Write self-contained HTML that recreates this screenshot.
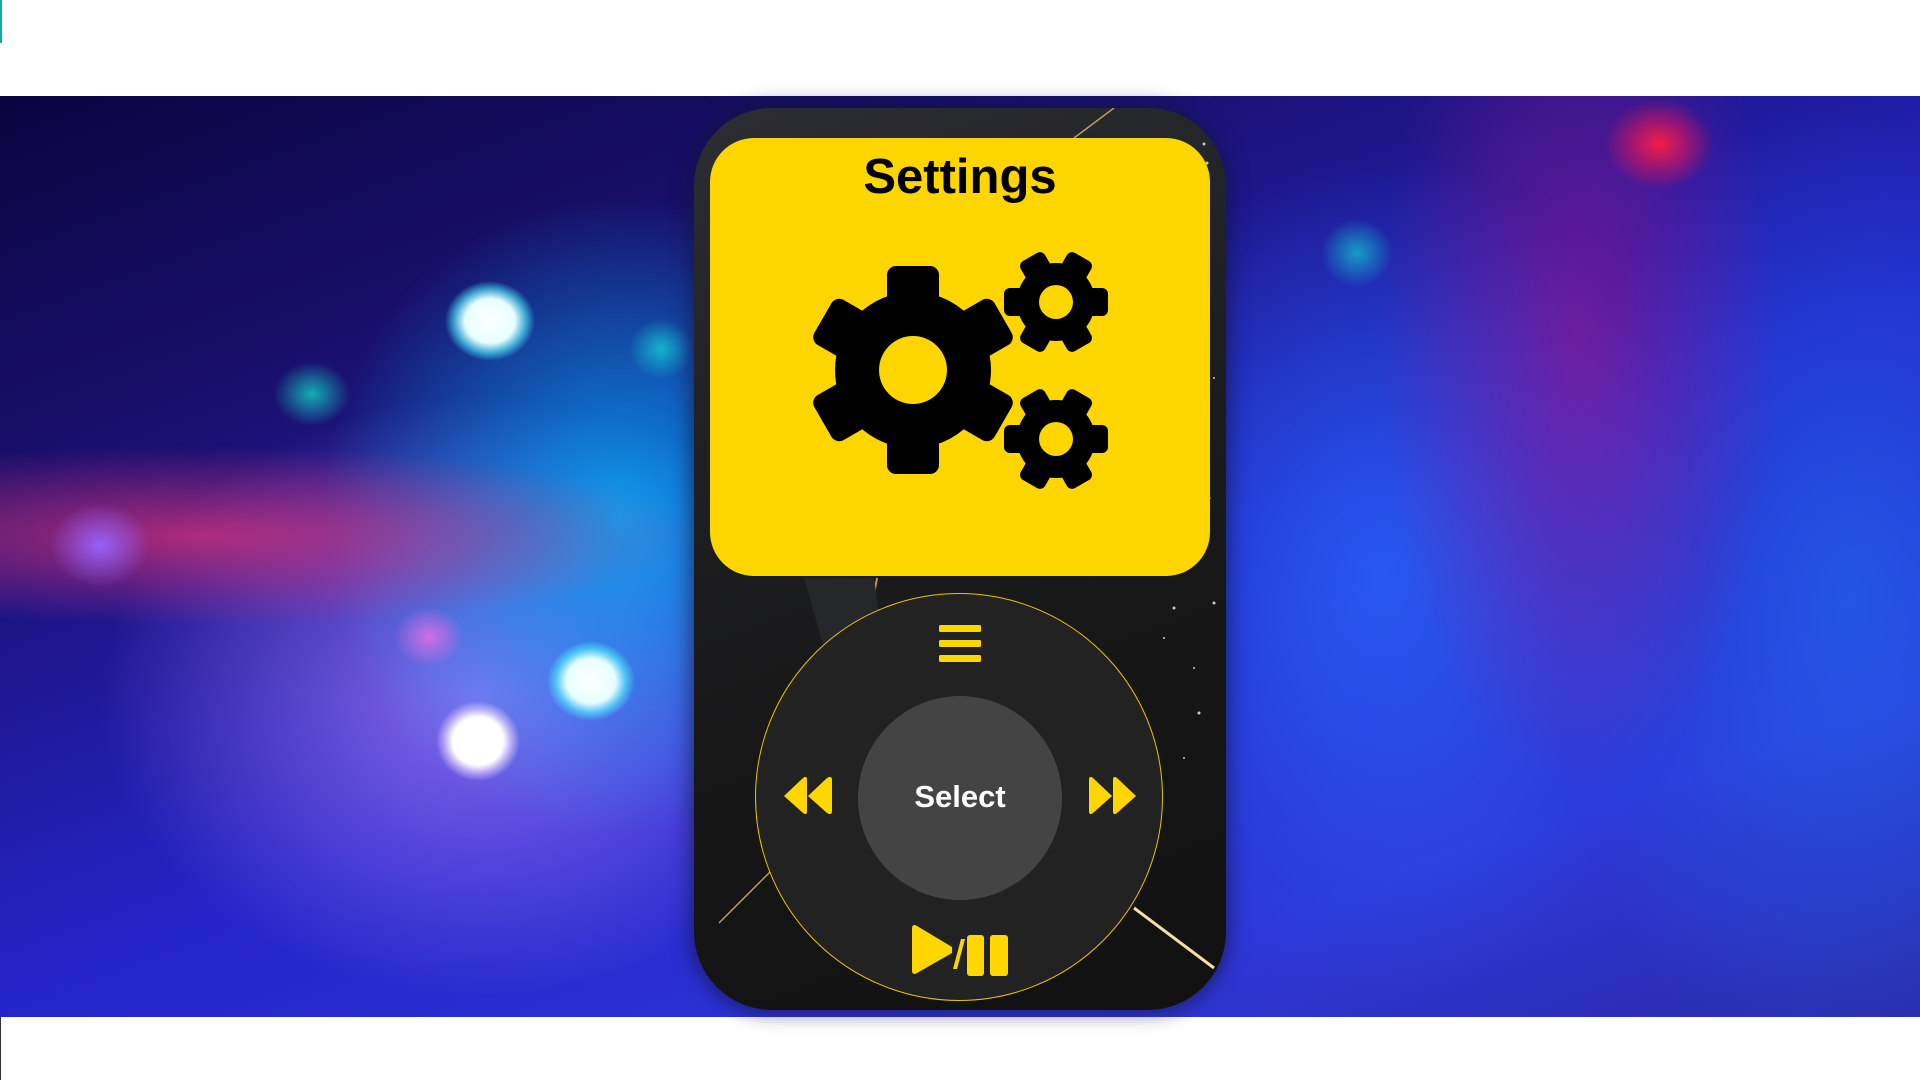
<!DOCTYPE html>
<html><head><meta charset="utf-8"><style>
html,body{margin:0;padding:0;width:1920px;height:1080px;overflow:hidden;background:#fff;font-family:"Liberation Sans",sans-serif}
.bg{position:absolute;left:0;top:96px;width:1920px;height:921px;overflow:hidden;
background:
radial-gradient(ellipse 45px 40px at 490px 225px,#fff 0,#e8ffff 55%,rgba(80,240,255,.6) 80%,rgba(0,200,255,0) 100%),
radial-gradient(ellipse 32px 30px at 661px 253px,rgba(20,190,210,.9) 0,rgba(20,190,210,0) 100%),
radial-gradient(ellipse 38px 32px at 312px 298px,rgba(20,190,190,.9) 0,rgba(20,190,190,0) 100%),
radial-gradient(ellipse 50px 42px at 100px 449px,rgba(150,100,255,.95) 0,rgba(150,100,255,0) 100%),
radial-gradient(ellipse 35px 30px at 429px 541px,rgba(220,110,230,.9) 0,rgba(220,110,230,0) 100%),
radial-gradient(ellipse 44px 40px at 591px 585px,#fff 0,#e8ffff 55%,rgba(80,240,255,.6) 80%,rgba(0,200,255,0) 100%),
radial-gradient(ellipse 42px 40px at 478px 645px,#fff 0,#fff 60%,rgba(255,230,255,.5) 80%,rgba(255,255,255,0) 100%),
radial-gradient(ellipse 36px 34px at 1357px 157px,rgba(20,170,200,.9) 0,rgba(20,170,200,0) 100%),
radial-gradient(ellipse 55px 45px at 1659px 48px,rgba(240,30,70,1) 0,rgba(220,20,90,.6) 50%,rgba(200,20,90,0) 100%),
radial-gradient(ellipse 500px 90px at 200px 440px,rgba(220,50,120,.75) 0,rgba(220,50,120,0) 100%),
radial-gradient(ellipse 300px 320px at 620px 420px,rgba(0,190,255,.75) 0,rgba(0,190,255,0) 100%),
radial-gradient(ellipse 380px 300px at 480px 600px,rgba(170,130,255,.75) 0,rgba(170,130,255,0) 100%),
radial-gradient(ellipse 200px 450px at 1580px 250px,rgba(170,20,130,.55) 0,rgba(170,20,130,0) 100%),
radial-gradient(ellipse 320px 420px at 1380px 480px,rgba(40,110,255,.7) 0,rgba(40,110,255,0) 100%),
radial-gradient(ellipse 300px 500px at 1850px 500px,rgba(30,110,240,.6) 0,rgba(30,110,240,0) 100%),
linear-gradient(160deg,#0a0440 0%,#1a1070 25%,#2424c8 55%,#2e36d8 80%,#2a2aa8 100%);}
.ipod{position:absolute;left:694px;top:108px;width:532px;height:902px;border-radius:78px;
background:linear-gradient(160deg,#2d2e33 0%,#1e1f22 35%,#161616 65%,#111 100%);box-shadow:0 0 18px 4px rgba(20,20,60,.6);overflow:hidden}
.screen{position:absolute;left:16px;top:30px;width:500px;height:438px;background:#fdd600;border-radius:44px}
.title{position:absolute;left:0;top:11px;width:100%;text-align:center;font-weight:bold;font-size:49px;color:#000}
.wheel{position:absolute;left:61px;top:485px;width:408px;height:408px;border-radius:50%;background:#222;border:1.5px solid #e8c400;box-sizing:border-box}
.inner{position:absolute;left:102px;top:102px;width:204px;height:204px;border-radius:50%;background:#444;color:#fff;font-weight:bold;font-size:31px;text-align:center;line-height:202px}
</style></head><body>
<div style="position:absolute;left:0;top:0;width:2px;height:43px;background:#1aa"></div>
<div style="position:absolute;left:0;top:1017px;width:1px;height:63px;background:#333"></div>
<div class="bg"></div>
<div class="ipod">
<svg width="532" height="902" style="position:absolute;left:0;top:0">
<line x1="380" y1="30" x2="420" y2="0" stroke="#b8a060" stroke-width="1.5"/>
<line x1="25" y1="815" x2="100" y2="740" stroke="#b8a060" stroke-width="1.5"/>
<line x1="440" y1="800" x2="520" y2="860" stroke="#f5e0a0" stroke-width="3"/>
<line x1="183" y1="470" x2="178" y2="498" stroke="#c8a020" stroke-width="2"/>
<polygon points="110,470 180,470 200,610 150,610" fill="#26272b"/>
<g fill="#ccc"><circle cx="515" cy="390" r="1.5"/><circle cx="520" cy="270" r="1"/><circle cx="520" cy="495" r="1.5"/><circle cx="480" cy="500" r="1.5"/><circle cx="470" cy="530" r="1"/><circle cx="500" cy="560" r="1"/><circle cx="505" cy="605" r="1.5"/><circle cx="490" cy="650" r="1"/><circle cx="510" cy="36" r="1.5"/><circle cx="513" cy="55" r="1.5"/></g>
</svg>
<div class="screen">
<div class="title">Settings</div>
<svg width="500" height="438" style="position:absolute;left:0;top:0">
<defs>
<g id="tb"><rect x="-26" y="-104" width="52" height="40" rx="9"/></g>
<g id="ts"><rect x="-14" y="-52" width="28" height="22" rx="6"/></g>
</defs>
<g transform="translate(203,232)" fill="#000">
<circle r="78"/>
<use href="#tb"/><use href="#tb" transform="rotate(60)"/><use href="#tb" transform="rotate(120)"/><use href="#tb" transform="rotate(180)"/><use href="#tb" transform="rotate(240)"/><use href="#tb" transform="rotate(300)"/>
<circle r="34" fill="#fdd600"/>
</g>
<g transform="translate(346,164)" fill="#000">
<circle r="39"/>
<g transform="rotate(90)"><use href="#ts"/><use href="#ts" transform="rotate(60)"/><use href="#ts" transform="rotate(120)"/><use href="#ts" transform="rotate(180)"/><use href="#ts" transform="rotate(240)"/><use href="#ts" transform="rotate(300)"/></g>
<circle r="17" fill="#fdd600"/>
</g>
<g transform="translate(346,301)" fill="#000">
<circle r="39"/>
<g transform="rotate(90)"><use href="#ts"/><use href="#ts" transform="rotate(60)"/><use href="#ts" transform="rotate(120)"/><use href="#ts" transform="rotate(180)"/><use href="#ts" transform="rotate(240)"/><use href="#ts" transform="rotate(300)"/></g>
<circle r="17" fill="#fdd600"/>
</g>
</svg>
</div>
<div class="wheel">
<svg width="408" height="408" style="position:absolute;left:-1px;top:-1px" fill="#ffd600">
<rect x="184" y="32" width="42" height="7" rx="1.5"/><rect x="184" y="47" width="42" height="7" rx="1.5"/><rect x="184" y="62" width="42" height="7" rx="1.5"/>
<path d="M29 203 L48 185 Q52 182 52 187 L52 218 Q52 223 48 220 Z"/>
<path d="M53 203 L72 185 Q77 182 77 187 L77 218 Q77 223 72 220 Z"/>
<path d="M381 203 L362 185 Q358 182 358 187 L358 218 Q358 223 362 220 Z"/>
<path d="M357 203 L338 185 Q334 182 334 187 L334 218 Q334 223 338 220 Z"/>
<path d="M157 336 Q157 330 162 333 L197 354 L197 360 L162 380 Q157 383 157 377 Z"/>
<path d="M198 376 L202 376 L210 346 L206 346 Z"/>
<rect x="212" y="342" width="17" height="41" rx="3"/>
<rect x="235" y="342" width="18" height="41" rx="3"/>
</svg>
<div class="inner">Select</div>
</div>
</div>
</body></html>
